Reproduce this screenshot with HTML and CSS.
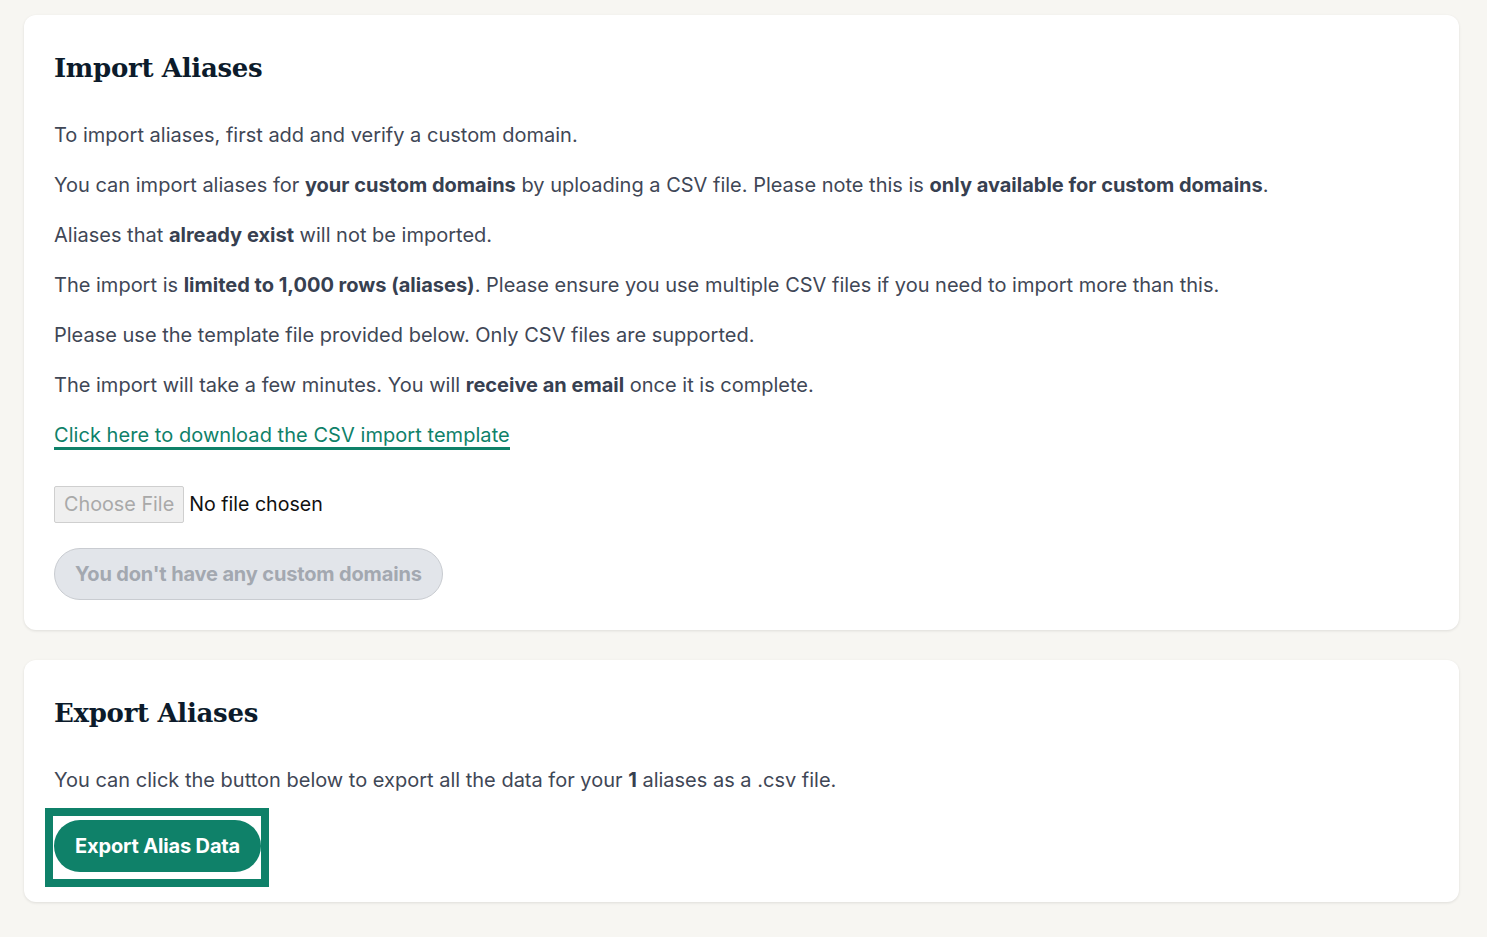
FILE: index.html
```html
<!DOCTYPE html>
<html>
<head>
  <meta charset="UTF-8" />
  <title>Import / Export Aliases</title>
  <meta name="viewport" content="width=device-width, initial-scale=1" />
  <link rel="stylesheet" href="styles.css">
</head>
<body>
  <div class="page">
    <section class="card">
      <h2>Import Aliases</h2>
      <p>To import aliases, first add and verify a custom domain.</p>
      <p>You can import aliases for <strong>your custom domains</strong> by uploading a CSV file. Please note this is <strong>only available for custom domains</strong>.</p>
      <p>Aliases that <strong>already exist</strong> will not be imported.</p>
      <p>The import is <strong>limited to 1,000 rows (aliases)</strong>. Please ensure you use multiple CSV files if you need to import more than this.</p>
      <p>Please use the template file provided below. Only CSV files are supported.</p>
      <p>The import will take a few minutes. You will <strong>receive an email</strong> once it is complete.</p>
      <p><a class="link" href="#">Click here to download the CSV import template</a></p>

      <div class="file-row">
        <span class="file-btn">Choose File</span>
        <span class="file-name">No file chosen</span>
      </div>

      <button type="button" class="btn btn-disabled" disabled>You don't have any custom domains</button>
    </section>

    <section class="card">
      <h2>Export Aliases</h2>
      <p>You can click the button below to export all the data for your <strong>1</strong> aliases as a .csv file.</p>
      <div class="focus-ring">
        <button type="button" class="btn btn-primary">Export Alias Data</button>
      </div>
    </section>
  </div>
</body>
</html>
```

FILE: styles.css
```css
body {
  margin: 0;
  background-color: #f7f6f2;
  font-family: Inter, "Noto Sans", sans-serif;
  color: #3f4756;
}

.page {
  padding: 15px 28px 35px 24px;
  display: flex;
  flex-direction: column;
  gap: 30px;
}

.card {
  background-color: #fff;
  border-radius: 12px;
  padding: 30px;
  box-shadow: 0 1px 3px rgba(0, 0, 0, 0.1);
}

h2 {
  margin: 0 0 31px;
  padding-top: 1px;
  font-family: "DejaVu Serif", serif;
  font-weight: bold;
  font-size: 26px;
  line-height: 44px;
  letter-spacing: -0.3px;
  color: #0c1b2b;
}

p {
  margin: 0 0 22px;
  font-size: 20px;
  line-height: 28px;
}

strong {
  font-weight: 700;
  color: #374050;
}

.link {
  color: #0f8169;
  text-decoration: none;
  border-bottom: 3px solid #0f8169;
  letter-spacing: 0.05px;
}

.file-row {
  display: flex;
  align-items: center;
  gap: 5px;
  margin-top: 37px;
  height: 36px;
}

.file-btn {
  box-sizing: border-box;
  height: 37px;
  padding: 0 9px;
  display: flex;
  align-items: center;
  background-color: #efefef;
  border: 1px solid #cfcfcf;
  border-radius: 2px;
  color: #a9a9a9;
  font-size: 19.8px;
}

.file-name {
  color: #111;
  font-size: 19.6px;
}

.btn {
  display: inline-block;
  border-radius: 999px;
  font-family: Inter, "Noto Sans", sans-serif;
  font-size: 20px;
  line-height: 28px;
  font-weight: 700;
  letter-spacing: -0.15px;
  padding: 11px 20px;
  border: 1px solid transparent;
}

.btn-disabled {
  margin-top: 26px;
  background-color: #e2e5ea;
  border-color: #c9ccd1;
  color: #a3a8b0;
}

.btn-primary {
  background-color: #0f8169;
  color: #fff;
  cursor: pointer;
}

/* keyboard focus ring around the export button */
.focus-ring {
  display: flex;
  width: fit-content;
  margin: 0 0 -7px -1px;
  padding: 4px 0 7px 1px;
  background-color: #fff;
  outline: 8px solid #0f8169;
}
```
